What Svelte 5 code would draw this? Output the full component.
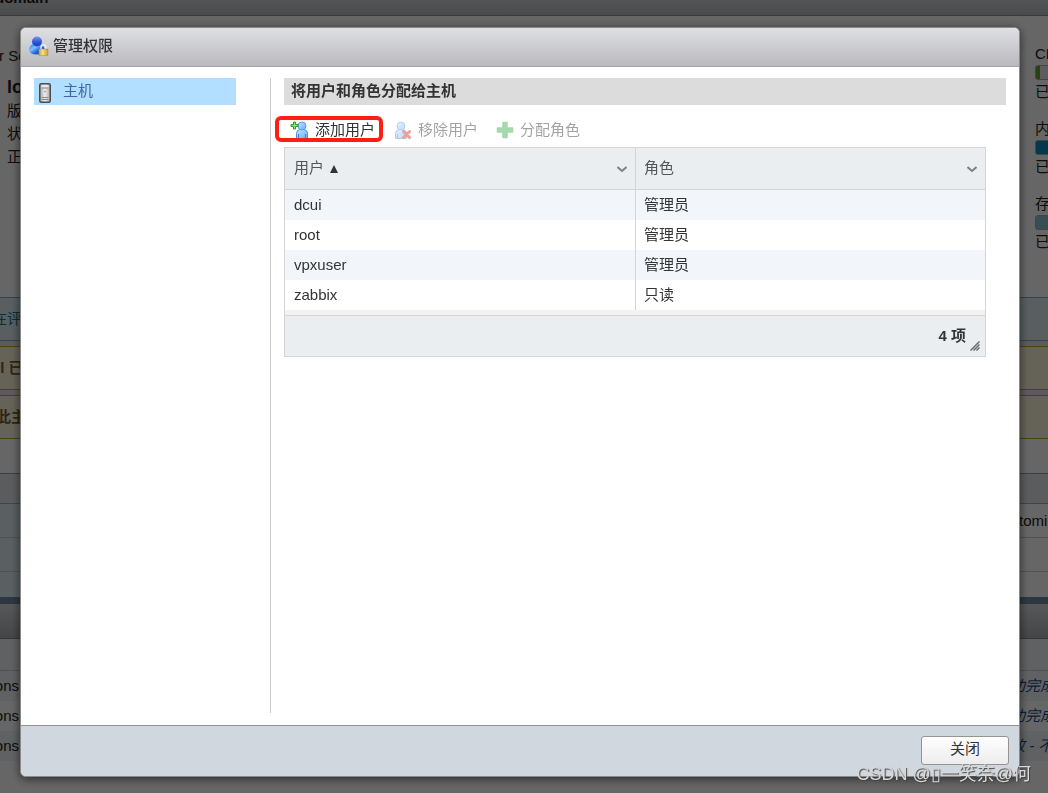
<script lang="ts">
    interface Permission {
        user: string;
        role: string;
    }

    let permissions: Permission[] = $state([
        { user: "dcui", role: "管理员" },
        { user: "root", role: "管理员" },
        { user: "vpxuser", role: "管理员" },
        { user: "zabbix", role: "只读" },
    ]);

    let ascending = $state(true);
    let open = $state(true);

    const sorted = $derived(
        [...permissions].sort((a, b) =>
            ascending
                ? a.user.localeCompare(b.user)
                : b.user.localeCompare(a.user),
        ),
    );

    const meters = [
        { name: "CPU", kind: "cpu" },
        { name: "内", kind: "memory" },
        { name: "存", kind: "storage" },
    ];

    const tasks = [
        { target: "ons", result: "功完成" },
        { target: "ons", result: "功完成" },
        { target: "ons", result: "败 - 不" },
    ];
</script>

{#snippet person()}
    <path
        d="M4.500 17.500V12.500q0-3.500 3.500-4h4q3.500.5 3.500 4v5z"
        fill="url(#sky)"
        stroke="#4a90e0"
    />
    <path d="M6.500 17v-4M13.500 17v-4" stroke="#3f86dc" fill="none" />
    <circle cx="10" cy="5" r="4" fill="url(#sky)" stroke="#5a9fe6" />
{/snippet}

<!-- Host page behind the dialog -->
<div class="page">
    <div class="topbar"><strong>domain</strong></div>

    <div class="summary">
        <div class="host">
            <span class="product">r Se</span>
            <strong>lo</strong>
            <span>版</span>
            <span>状</span>
            <span>正</span>
        </div>
        <div class="meters">
            {#each meters as meter}
                <div class="meter">
                    <span>{meter.name}</span>
                    <div class="track {meter.kind}"></div>
                    <span>已</span>
                </div>
            {/each}
        </div>
    </div>

    <div class="alerts">
        <div class="alert info">在评</div>
        <div class="alert warning">ll 已</div>
        <div class="alert warning">此主</div>
    </div>

    <div class="panel">
        <div class="panel-head"></div>
        <div class="panel-row"><span>tomi</span></div>
        <div class="panel-row"></div>
        <div class="panel-row short"></div>
    </div>

    <div class="tasks">
        <div class="tasks-title"></div>
        <div class="tasks-head"></div>
        {#each tasks as task}
            <div class="task">
                <span class="target">{task.target}</span>
                <em>{task.result}</em>
            </div>
        {/each}
    </div>
</div>

{#if open}
    <div class="backdrop">
        <div class="dialog" role="dialog" aria-labelledby="dialog-title">
            <header>
                <svg width="20" height="20" viewBox="0 0 20 20">
                    <defs>
                        <linearGradient id="blue" x1="0" y1="0" x2="1" y2="1">
                            <stop offset="0" stop-color="#2a6fe0" />
                            <stop offset="0.35" stop-color="#7cc0ff" />
                            <stop offset="0.6" stop-color="#2468e6" />
                            <stop offset="1" stop-color="#0b36b4" />
                        </linearGradient>
                        <linearGradient id="head" x1="0" y1="0" x2="0" y2="1">
                            <stop offset="0" stop-color="#7a96ee" />
                            <stop offset="0.6" stop-color="#2a52d6" />
                            <stop offset="1" stop-color="#1b3fbe" />
                        </linearGradient>
                        <linearGradient id="gold" x1="0" y1="0" x2="1" y2="0">
                            <stop offset="0" stop-color="#c9a53c" />
                            <stop offset="0.4" stop-color="#f5e08a" />
                            <stop offset="1" stop-color="#c99a2c" />
                        </linearGradient>
                        <linearGradient id="sky" x1="0" y1="0" x2="1" y2="1">
                            <stop offset="0" stop-color="#c8e6ff" />
                            <stop offset="1" stop-color="#64adf6" />
                        </linearGradient>
                    </defs>
                    <path
                        d="M0 14q0-4 4-6h8q3.500 2 3.500 6 0 4.500-7.500 4.500T0 14z"
                        fill="url(#blue)"
                    />
                    <circle cx="8" cy="5.500" r="5" fill="url(#head)" />
                    <path
                        d="M12 13v-1.500q0-2.500 2.500-2.500t2.500 2.500V13"
                        fill="none"
                        stroke="#e8edf2"
                        stroke-width="1.500"
                    />
                    <path
                        d="M10 13h9v6.500h-9z"
                        fill="url(#gold)"
                        stroke="#b58d2d"
                        stroke-width=".5"
                    />
                </svg>
                <h1 id="dialog-title">管理权限</h1>
            </header>

            <div class="content">
                <nav>
                    <button class="node">
                        <svg width="12" height="20" viewBox="0 0 12 20">
                            <defs>
                                <linearGradient id="steel">
                                    <stop offset="0" stop-color="#a8a8a8" />
                                    <stop offset="0.5" stop-color="#ededed" />
                                    <stop offset="1" stop-color="#a8a8a8" />
                                </linearGradient>
                            </defs>
                            <rect
                                x=".75"
                                y=".75"
                                width="10.500"
                                height="18.500"
                                rx="1.500"
                                fill="url(#steel)"
                                stroke="#4c4c4c"
                                stroke-width="1.500"
                            />
                            <path d="M2.500 2h7v2.500h-7z" fill="#e9e9e9" />
                            <path
                                d="M2.500 5h7M2.500 14.500h7M2.500 16.500h7"
                                stroke="#8a8a8a"
                            />
                            <circle cx="6" cy="8.500" r=".8" fill="#888" />
                        </svg>
                        <span>主机</span>
                    </button>
                </nav>

                <section>
                    <h2>将用户和角色分配给主机</h2>

                    <div class="toolbar">
                        <button class="tool marked">
                            <svg width="19" height="18" viewBox="0 0 19 18">
                                <g transform="translate(2 0)">
                                    {@render person()}
                                </g>
                                <path
                                    d="M3.500 1h2v2.500H8v2H5.500V8h-2V5.500H1v-2h2.500z"
                                    fill="#7bea5c"
                                    stroke="#2c9c34"
                                />
                            </svg>
                            添加用户
                        </button>
                        <button class="tool" disabled>
                            <svg width="19" height="18" viewBox="0 0 19 18">
                                <g transform="translate(-2 0)">
                                    {@render person()}
                                </g>
                                <path
                                    d="m10.500 10.500 6 6m0-6-6 6"
                                    stroke="#dd2c20"
                                    stroke-width="3"
                                    stroke-linecap="round"
                                />
                            </svg>
                            移除用户
                        </button>
                        <button class="tool" disabled>
                            <svg width="18" height="18" viewBox="0 0 18 18">
                                <path
                                    d="M7 1.500h4V7h5.500v4H11v5.500H7V11H1.500V7H7z"
                                    fill="#38b048"
                                    stroke="#38a848"
                                    stroke-width="1.500"
                                    stroke-linejoin="round"
                                />
                            </svg>
                            分配角色
                        </button>
                    </div>

                    <div class="grid">
                        <table>
                            <thead>
                                <tr>
                                    <th>
                                        <div class="column">
                                            <button
                                                class="sort"
                                                onclick={() =>
                                                    (ascending = !ascending)}
                                            >
                                                用户
                                                <svg
                                                    class:down={!ascending}
                                                    width="8"
                                                    height="8"
                                                    viewBox="0 0 8 8"
                                                >
                                                    <path
                                                        d="M4 0 8 8H0z"
                                                        fill="#333"
                                                    />
                                                </svg>
                                            </button>
                                            {@render menu("用户")}
                                        </div>
                                    </th>
                                    <th>
                                        <div class="column">
                                            <button class="sort">角色</button>
                                            {@render menu("角色")}
                                        </div>
                                    </th>
                                </tr>
                            </thead>
                            <tbody>
                                {#each sorted as row}
                                    <tr>
                                        <td>{row.user}</td>
                                        <td>{row.role}</td>
                                    </tr>
                                {/each}
                            </tbody>
                        </table>
                        <div class="grid-foot">
                            <span>{permissions.length} 项</span>
                            <svg width="10" height="10" viewBox="0 0 10 10">
                                <path
                                    d="M.5 9.500 9.500.5M3.500 9.500l6-6M6.500 9.500l3-3"
                                    stroke="#6c6c6c"
                                    stroke-width="1.500"
                                />
                            </svg>
                        </div>
                    </div>
                </section>
            </div>

            <footer>
                <button class="close" onclick={() => (open = false)}>
                    关闭
                </button>
            </footer>
        </div>
    </div>
{/if}

<div class="watermark">CSDN @▯一笑奈@何</div>

{#snippet menu(name: string)}
    <button class="menu" aria-label={name}>
        <svg width="10" height="7" viewBox="0 0 10 7">
            <path
                d="m.5 1 4.500 4 4.500-4"
                fill="none"
                stroke="#808080"
                stroke-width="2"
            />
        </svg>
    </button>
{/snippet}

<style>
    :global(body) {
        margin: 0;
        color: #333;
        font-family: "Liberation Sans", "Noto Sans CJK SC", sans-serif;
        font-size: 15px;
        line-height: 22px;
    }

    .page,
    .page *,
    .backdrop,
    .backdrop * {
        box-sizing: border-box;
    }

    .page {
        height: 100vh;
        overflow: hidden;
        white-space: nowrap;
        color: #222;
        background: #fff;
    }

    .topbar {
        display: flex;
        align-items: flex-end;
        height: 16px;
        padding-bottom: 6px;
        overflow: hidden;
        border-bottom: 1px solid #909294;
        background: linear-gradient(#cfd1d3, #bbbdc0);
    }

    .topbar strong {
        margin-left: -5px;
    }

    .summary {
        display: flex;
        justify-content: space-between;
        height: 281px;
        padding-top: 26px;
    }

    .host {
        display: flex;
        flex-direction: column;
        padding-left: 7px;
        line-height: 23px;
    }

    .host .product {
        margin: 2px 0 9px -8px;
    }

    .host strong {
        font-size: 18px;
    }

    .meters {
        width: 13px;
    }

    .meter {
        height: 75px;
    }

    .meter span {
        display: block;
        line-height: 23px;
    }

    .track {
        width: 100px;
        height: 15px;
        border: 1px solid #aaa;
        border-radius: 3px;
        background: #e8e8e8;
    }

    .track.cpu {
        background: linear-gradient(90deg, #62a832 4px, #e8e8e8 4px);
    }

    .track.memory {
        background: #0d8ac4;
    }

    .track.storage {
        background: #8bc4d2;
    }

    .alerts {
        display: grid;
        gap: 5px;
        background: #e4e4e4;
    }

    .alert {
        height: 44px;
        overflow: hidden;
        border: solid;
        border-width: 1px 0;
        line-height: 42px;
        text-indent: -8px;
    }

    .alert.info {
        color: #19748c;
        border-color: #86a4d8;
        background: #dcedf2;
    }

    .alert.warning {
        color: #7a5a2c;
        border-color: #c5a437;
        background: #fcf5dc;
        font-weight: bold;
        text-indent: -4px;
    }

    .panel {
        margin-top: 34px;
        border-top: 1px solid #999;
        border-bottom: 7px solid #708ba0;
    }

    .panel-head {
        height: 30px;
        border-bottom: 1px solid #aaa;
        background: #e4e6e8;
    }

    .panel-row {
        display: flex;
        justify-content: flex-end;
        height: 34px;
        border-bottom: 1px solid #d2cdc8;
        background: linear-gradient(90deg, #e0f0f4 50%, #fff 50%);
        line-height: 34px;
    }

    .panel-row.short {
        height: 25px;
        border-bottom: 0;
    }

    .panel-row span {
        width: 29px;
    }

    .tasks-title {
        height: 35px;
        border-bottom: 1px solid #888;
        background: linear-gradient(#d8dadc, #acaeb2);
    }

    .tasks-head {
        height: 32px;
        border-bottom: 1px solid #ccc;
        background: #f1f2f4;
    }

    .task {
        display: flex;
        justify-content: space-between;
        height: 30px;
        line-height: 30px;
    }

    .task:nth-child(odd) {
        background: #f0f3f7;
    }

    .target {
        display: flex;
        justify-content: flex-end;
        width: 19px;
    }

    .task em {
        width: 38px;
        color: #1c4f8c;
    }

    .backdrop {
        position: fixed;
        inset: 0;
        padding: 27px 28px 16px 20px;
        background: rgba(0, 0, 0, 0.6);
    }

    .dialog {
        display: flex;
        flex-direction: column;
        height: 100%;
        overflow: hidden;
        border: 1px solid #8a8a8a;
        border-radius: 6px;
        background: #fff;
        box-shadow: 0 2px 10px rgba(0, 0, 0, 0.6);
    }

    header {
        display: flex;
        align-items: center;
        gap: 4px;
        height: 39px;
        padding: 0 8px 2px;
        border-bottom: 1px solid #a3a2a6;
        background: linear-gradient(#dfe0e3, #b9b9be);
    }

    h1,
    h2 {
        margin: 0;
        font-size: 15px;
        font-weight: 500;
    }

    button {
        margin: 0;
        padding: 0;
        border: 0;
        color: inherit;
        background: none;
        font: inherit;
        cursor: pointer;
    }

    .content {
        display: flex;
        flex: 1;
        padding: 11px 13px 12px;
    }

    nav {
        width: 237px;
        padding-right: 34px;
        border-right: 1px solid #ccc;
    }

    .node {
        display: flex;
        align-items: center;
        gap: 12px;
        width: 100%;
        height: 27px;
        padding-left: 5px;
        color: #3a69a3;
        background: #b2dfff;
    }

    .node svg {
        margin-top: 3px;
    }

    .node span {
        padding-bottom: 2px;
    }

    section {
        flex: 1;
        padding-left: 13px;
    }

    h2 {
        height: 27px;
        padding-left: 7px;
        background: #dcdcdc;
        font-weight: bold;
        line-height: 26px;
    }

    .toolbar {
        display: flex;
        align-items: center;
        gap: 18px;
        height: 42px;
        padding: 8px 6px 0;
    }

    .tool {
        position: relative;
        display: flex;
        align-items: center;
        gap: 6px;
        white-space: nowrap;
    }

    .tool:disabled {
        opacity: 0.45;
        cursor: default;
    }

    .marked::after {
        content: "";
        position: absolute;
        inset: -3px -8px -1px -15px;
        border: 4px solid #ff1e14;
        border-radius: 6px;
    }

    .grid {
        margin-right: 20px;
        border: 1px solid #d3d5d6;
        background: #f2f2f2;
    }

    table {
        width: 100%;
        table-layout: fixed;
        border-spacing: 0;
        background: #fff;
    }

    th,
    td {
        padding: 0 8px 0 9px;
        text-align: left;
    }

    th + th,
    td + td {
        border-left: 1px solid #d3d5d6;
        padding-left: 8px;
    }

    th {
        height: 42px;
        padding-bottom: 2px;
        border-bottom: 1px solid #d3d5d6;
        color: #555;
        background: #eaeef1;
        font-weight: normal;
    }

    td {
        height: 30px;
    }

    tbody tr:nth-child(odd) {
        background: #f2f6fb;
    }

    .column {
        display: flex;
        align-items: center;
        justify-content: space-between;
    }

    .sort {
        display: flex;
        align-items: center;
        gap: 6px;
    }

    .sort svg,
    .menu svg {
        margin-top: 3px;
    }

    .sort .down {
        transform: scaleY(-1);
    }

    .menu {
        display: flex;
    }

    .grid-foot {
        display: flex;
        align-items: center;
        justify-content: flex-end;
        gap: 4px;
        height: 41px;
        margin-top: 5px;
        padding-right: 5px;
        border-top: 1px solid #d3d5d6;
        background: #eaeef1;
        font-weight: bold;
    }

    .grid-foot svg {
        align-self: flex-end;
        margin-bottom: 5px;
    }

    footer {
        display: flex;
        align-items: center;
        justify-content: flex-end;
        height: 51px;
        padding: 0 10px 2px 0;
        border-top: 1px solid #8f9194;
        background: #d0d7df;
    }

    .close {
        width: 88px;
        height: 29px;
        padding-bottom: 2px;
        border: 1px solid #949494;
        border-radius: 3px;
        background: linear-gradient(#fff, #ececec);
    }

    .watermark {
        position: fixed;
        right: 17px;
        bottom: 7px;
        color: #d8d8d8;
        font-size: 18px;
        line-height: 24px;
        text-shadow: 1px 1px 1px #444;
        white-space: nowrap;
    }
</style>
